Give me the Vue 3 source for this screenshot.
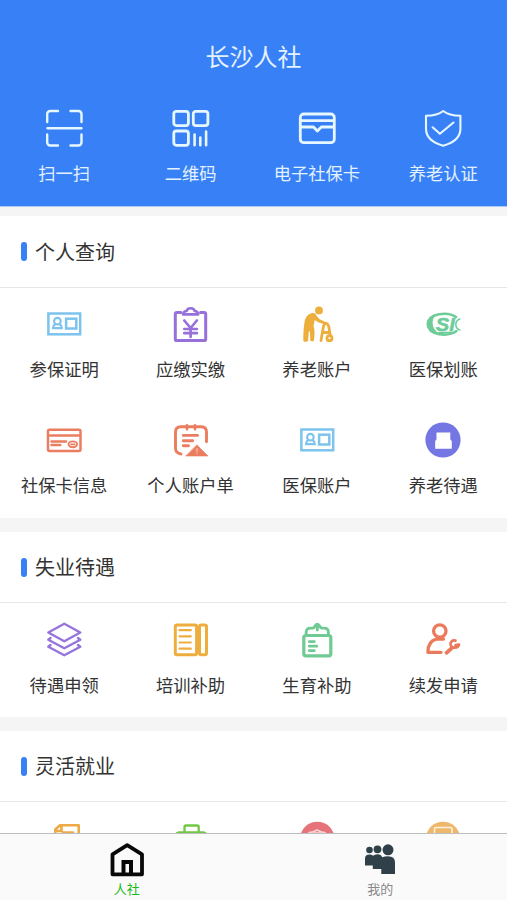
<script setup>
const quick = [
  { icon: 'scan', label: '扫一扫' },
  { icon: 'qr', label: '二维码' },
  { icon: 'wallet', label: '电子社保卡' },
  { icon: 'shield', label: '养老认证' },
]
const sections = [
  {
    id: 'query',
    title: '个人查询',
    items: [
      { icon: 'idcard', label: '参保证明' },
      { icon: 'yen', label: '应缴实缴' },
      { icon: 'elder', label: '养老账户' },
      { icon: 'si', label: '医保划账' },
      { icon: 'card', label: '社保卡信息' },
      { icon: 'bill', label: '个人账户单' },
      { icon: 'idcard', label: '医保账户' },
      { icon: 'disc', label: '养老待遇' },
    ],
  },
  {
    id: 'unemployed',
    title: '失业待遇',
    items: [
      { icon: 'layers', label: '待遇申领' },
      { icon: 'book', label: '培训补助' },
      { icon: 'jar', label: '生育补助' },
      { icon: 'repair', label: '续发申请' },
    ],
  },
  {
    id: 'flexible',
    title: '灵活就业',
    items: [
      { icon: 'doc', label: '' },
      { icon: 'case', label: '' },
      { icon: 'red', label: '' },
      { icon: 'orange', label: '' },
    ],
  },
]
const shapes = {
  scan: `<g stroke="#e6f7ff" stroke-width="2.4"><path d="M3.200 14V6a3 3 0 0 1 3-3H14M26.500 3h8a3 3 0 0 1 3 3v8M3.200 26.500v8a3 3 0 0 0 3 3H14M26.500 37.500h8a3 3 0 0 0 3-3v-8M3.500 20.300h34"/></g>`,
  qr: `<g stroke="#e6f7ff" stroke-width="2.800"><rect x="2.800" y="3.300" width="14.600" height="14.300" rx="2.500"/><rect x="22.300" y="3.300" width="14.600" height="14.300" rx="2.500"/><rect x="2.800" y="23" width="14.600" height="14.300" rx="2.500"/><path d="M23.600 26.500v10.800M29.300 29.500v7.800M35.100 23.500v13.800" stroke-width="2.600"/></g>`,
  wallet: `<g stroke="#e6f7ff" stroke-width="2.800"><rect x="3.300" y="6" width="34" height="28.700" rx="3.500"/><path d="M4 12.600h33M4 19h12.500l3.900 4 3.900-4H37" stroke-linecap="butt"/></g>`,
  shield: `<g stroke="#e6f7ff" stroke-width="2.100"><path d="M20.200 3C15.500 6.800 9.500 7.700 3 7.800v13c0 9 8 14.400 17.200 16.900 9.200-2.500 17.200-7.900 17.200-16.900v-13C31 7.700 25 6.800 20.200 3z"/><path d="M9.600 19.300l7.300 6.500L30.500 14.500"/></g>`,
  idcard: `<g stroke="#7cc3ed" stroke-width="2.500" stroke-linejoin="miter"><rect x="4.400" y="9.500" width="31.800" height="20.800"/><rect x="22.100" y="14.700" width="10.200" height="9.800"/><circle cx="13.400" cy="17.200" r="3.300" stroke-width="2.100"/><path d="M11.300 20.200c-1.500.7-2.200 1.900-2.300 3.900h8.800c-.1-2-.8-3.200-2.300-3.900" stroke-width="2.100"/></g>`,
  yen: `<g stroke="#9870da" stroke-width="3"><path d="M10 8.400H6q-1.700 0-1.700 1.700v24.800q0 1.700 1.700 1.700h27q1.700 0 1.700-1.700V10.100q0-1.700-1.700-1.700H29.500"/><path d="M12.100 10.400c.2-2.200 1.500-3.300 3.700-3.400.3-3.700 7.400-3.700 7.700 0 2.200.1 3.500 1.200 3.700 3.400z" stroke-width="2.600"/><path d="M13.300 16.500l6.300 7.500 6.300-7.500M19.600 24v9M13.300 25h12.600M13.300 29.200h12.600" stroke-width="2.700"/></g>`,
  elder: `<circle cx="22" cy="6.400" r="3.900" fill="#edae3c"/><path d="M7.600 17.500C8.600 12.500 11.500 9 16 8.900c2 0 3 1 4 3.500l3 3.200 7 3c1 1 .5 2.200-.8 2.200l-8-2.500-3.500-2.300-1.200 6c1.500 4 1.200 9 .5 14.200-.5 1.600-3.500 1.600-3.700 0l-.4-9-1.100.5-.7 8.700c-.4 1.700-4.700 1.700-4.800 0 0-6 .2-12 1.300-18.900z" fill="#edae3c"/><g stroke="#edae3c" stroke-width="2.800"><path d="M29 19.500c-2.300 0-2.700 3-3.100 6L24 36.500M29 19.500c2.500 0 2.800 2.500 3.200 5.500l.8 5.500M26 28.500h6"/><circle cx="32.500" cy="34.200" r="2.500"/></g>`,
  si: `<path d="M33 13C25 7.300 5 9 5 20.300 5 31.500 25 33 33.500 27" stroke="#6dcc98" stroke-width="2.600"/><path d="M12 11c-4.500 5-4 13 2.500 18C1 26 1 14.500 12 11z" fill="#6dcc98" stroke="#6dcc98"/><path d="M36.800 15C31.500 17 31.500 24 36.800 26" stroke="#6dcc98" stroke-width="1.500"/><path d="M16 28.500h14" stroke="#6dcc98" stroke-width="1.700"/><text x="12.800" y="26.800" class="mark" textLength="19" lengthAdjust="spacingAndGlyphs">SI</text>`,
  card: `<g stroke="#eb7d60" stroke-width="2.500"><rect x="4" y="9.800" width="32.500" height="21.100" rx="1.500"/><path d="M4 15.400h32M7.500 21.400H22M7.500 24.900h8.800"/><ellipse cx="28.800" cy="24.300" rx="4.300" ry="2.900" stroke-width="1.900"/><path d="M27 24.400h3.500" stroke-width="1.800"/></g>`,
  bill: `<g stroke="#eb7d60" stroke-width="2.900"><path d="M10 34C6.500 33.500 4.500 31.500 4.500 28V12c0-3.300 2-5.300 5.300-5.300h20.400c3.300 0 5.300 2 5.300 5.300v9.800"/><path d="M16 5.200v4M24 5.200v4" stroke-width="2.600"/><path d="M12.300 15.400h14.200M12.300 20.700h9.300M12.300 25.800h5.200" stroke-width="2.900"/></g><path d="M26 25L37 36H15z" fill="#eb7d60" stroke="#eb7d60" stroke-width=".6"/><path d="M26 28.500v3M26 33v.3" stroke="#f9d5cb" stroke-width="1"/>`,
  disc: `<circle cx="20" cy="20" r="17.600" fill="#7477e3"/><path d="M13.500 12.600h13.800v7l1.500 1.500v7.600H12.200v-7.600l1.300-1.500z" fill="#fff"/>`,
  layers: `<g stroke="#9575dc" stroke-width="2.400"><path d="M20.300 3.800L36.300 12.500 20.300 21.300 4.300 12.500z"/><path d="M6.500 18L4.300 19.700 20.300 28.300 36.300 19.700 34 18M6.500 25L4.300 26.700 20.300 35.300 36.300 26.700 34 25"/></g>`,
  book: `<g stroke="#edae3e" stroke-width="3"><rect x="4.300" y="5" width="21.300" height="29.700" rx="1.800"/><rect x="28.500" y="5" width="7" height="29.700" rx="1.800"/><path d="M8.500 10.200h11.300M8.500 16.300h11.300M8.500 22.500h11.300M8.500 28.700h11.300" stroke-width="2.200"/></g>`,
  jar: `<g stroke="#6fca94" stroke-width="3.200"><rect x="6.800" y="15.500" width="27" height="20.300" rx="2"/><path d="M9.200 14.500v-2.200q0-4.200 4.300-4.200h2.300c2.200 0 2-3.900 4.500-3.900s2.300 3.900 4.500 3.900h2.300q4.300 0 4.300 4.200v2.200M20.300 5.500v4.500" stroke-width="2.900"/><path d="M12.300 21.600h5M12.300 26.200h7.500M12.300 30.700h5" stroke-width="2.800"/></g>`,
  repair: `<g stroke="#eb7a5c" stroke-width="3.300"><circle cx="16.800" cy="11" r="6.200"/><path d="M13.500 19.200C8 20.500 4.900 25.500 4.900 32.300H18M13.500 19h7"/><path d="M23.500 32.800l5.500-5" stroke-width="3.800"/><path d="M32.500 20.600c-3.200-.8-5.700 1.600-4.800 4.600 1.200 3.500 7.200 3.300 8.300-.6l-3.500.6" stroke-width="2.700"/></g>`,
  doc: `<g stroke="#edaa47" stroke-width="2.600"><path d="M11.300 34V10.500L16 6.300H34.700V34zM12 12h5.500V7M19 13.600h10"/></g>`,
  case: `<g stroke="#72c746" stroke-width="2.300"><path d="M13.500 13V8q0-1.500 1.500-1.500h11.200q1.500 0 1.500 1.500v5"/><rect x="5.300" y="13.300" width="29.800" height="21" rx="3"/></g>`,
  red: `<circle cx="20.300" cy="20" r="17.300" fill="#e57379"/><path d="M12 13.500c4 0 6-1.500 8-2.500 2 1 4 2.500 8 2.500v8q-1 6-8 8-7-2-8-8zM17 14h6" stroke="#fad8d9" stroke-width="1.600"/>`,
  orange: `<circle cx="20" cy="20" r="17.300" fill="#edb86c"/><rect x="11.500" y="8.500" width="17.500" height="17" rx="1.500" stroke="#fff0d9" stroke-width="1.600"/>`,
}
</script>

<template>
  <div class="screen">
    <header class="top">
      <h1>长沙人社</h1>
      <div class="grid">
        <div v-for="q in quick" :key="q.label" class="item">
          <svg viewBox="0 0 40 40" class="icon" v-html="shapes[q.icon]"></svg>
          <span>{{ q.label }}</span>
        </div>
      </div>
    </header>
    <main>
      <section v-for="s in sections" :key="s.id" :class="s.id">
        <h2><i class="bar"></i>{{ s.title }}</h2>
        <div class="grid">
          <div v-for="item in s.items" :key="item.icon + item.label" class="item">
            <svg viewBox="0 0 40 40" class="icon" v-html="shapes[item.icon]"></svg>
            <span v-if="item.label">{{ item.label }}</span>
          </div>
        </div>
      </section>
    </main>
    <nav>
      <div class="tab active">
        <svg viewBox="0 0 36 36"><path d="M3.500 12.300L18.200 3.200 33 12.300V32.300H3.500z" fill="none" stroke="#080808" stroke-width="3.800" stroke-linejoin="round" /><path d="M14.500 32V20h7.500V32" fill="none" stroke="#080808" stroke-width="4" /></svg>
        <span>人社</span>
      </div>
      <div class="tab">
        <svg viewBox="0 0 36 36" fill="#2f4049"><circle cx="7.500" cy="8" r="3.300" /><circle cx="15.500" cy="7.300" r="3.900" /><circle cx="26" cy="7.800" r="5.500" /><path d="M3 23.500V16.500q0-4 4.500-4 2.500 0 3.500 1.300Q12.500 12.200 15.500 12.200q3.800 0 4.700 3Q22.500 14.300 26 14.300q7 0 7 6V32H19.300V27H10.800V23.500z" /></svg>
        <span>我的</span>
      </div>
    </nav>
  </div>
</template>

<style>
body { overflow: hidden; }
</style>

<style scoped>
.screen {
  height: 900px;
  display: flex;
  flex-direction: column;
  overflow: hidden;
  background: #f5f5f5;
  font-family: "Noto Sans CJK SC", sans-serif;
  color: #333;
}
.top {
  flex: none;
  box-sizing: border-box;
  height: 207px;
  padding-top: 39px;
  background: #3880f6;
  border-bottom: 1px solid #a9c9f6;
  color: #e3f2ff;
}
h1 {
  margin: 0 0 35px;
  font-size: 24px;
  line-height: 34px;
  font-weight: 400;
  text-align: center;
}
.grid {
  display: grid;
  grid-template-columns: repeat(4, 1fr);
  row-gap: 39px;
  padding: 0 .5px 0 1px;
}
.item {
  display: flex;
  flex-direction: column;
  align-items: center;
  gap: 13px;
  font-size: 17.3px;
  line-height: 24px;
  white-space: nowrap;
}
.icon {
  width: 40px;
  height: 40px;
  fill: none;
  stroke-linecap: round;
  stroke-linejoin: round;
}
.icon :deep(.mark) {
  fill: #6dcc98;
  stroke: #6dcc98;
  stroke-width: .5px;
  font: italic bold 18px "Liberation Sans", sans-serif;
}
main {
  flex: 1;
  min-height: 0;
  overflow: hidden;
  display: flex;
  flex-direction: column;
  gap: 14px;
  padding-top: 9px;
}
section {
  flex: none;
  background: #fff;
}
section .grid { padding-top: 17px; }
.query h2 { height: 71px; }
.query .grid { padding-top: 16px; padding-bottom: 21px; }
.unemployed .grid { padding-bottom: 20px; }
h2 {
  display: flex;
  align-items: center;
  gap: 8px;
  height: 70px;
  margin: 0;
  padding-left: 21px;
  border-bottom: 1px solid #e6e6e6;
  font-size: 20px;
  line-height: 30px;
  font-weight: 400;
}
.bar {
  width: 6px;
  height: 19px;
  border-radius: 3px;
  background: #3880f6;
}
nav {
  flex: none;
  box-sizing: border-box;
  height: 67px;
  display: flex;
  border-top: 1px solid #bdbdbd;
  background: #fafafa;
}
.tab {
  flex: 1;
  display: flex;
  flex-direction: column;
  align-items: center;
  padding-top: 8px;
  font-size: 13px;
  line-height: 18px;
  color: #888;
}
.tab svg { width: 36px; height: 36px; margin-bottom: 2px; }
.active { color: #1ab91a; }
</style>
